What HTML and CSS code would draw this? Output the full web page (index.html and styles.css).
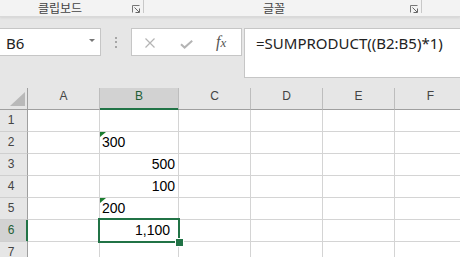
FILE: index.html
```html
<!DOCTYPE html>
<html lang="ko">
<head>
<meta charset="utf-8">
<link rel="stylesheet" href="styles.css">
</head>
<body>
<div class="ribbon">
  <div class="group g1">
    <span class="glabel">클립보드</span>
    <svg class="launcher" width="8" height="8" viewBox="0 0 8 8"><path d="M0.5 7.5V0.5H7.5" fill="none" stroke="#777" stroke-width="1"/><path d="M2.5 2.5L7 7M7.5 3.5V7.5H3.5" fill="none" stroke="#666" stroke-width="1"/></svg>
  </div>
  <div class="group g2">
    <span class="glabel">글꼴</span>
    <svg class="launcher" width="8" height="8" viewBox="0 0 8 8"><path d="M0.5 7.5V0.5H7.5" fill="none" stroke="#777" stroke-width="1"/><path d="M2.5 2.5L7 7M7.5 3.5V7.5H3.5" fill="none" stroke="#666" stroke-width="1"/></svg>
  </div>
</div>
<div class="fbar">
  <div class="namebox"><span class="ref">B6</span><span class="arrow"></span></div>
  <div class="dots"><i></i><i></i><i></i></div>
  <div class="fbuttons">
    <svg class="ic-x" width="10" height="10" viewBox="0 0 10 10"><path d="M0.5 0.5L9.5 9.5M9.5 0.5L0.5 9.5" stroke="#b4b4b4" stroke-width="1.2" fill="none"/></svg>
    <svg class="ic-ok" width="13" height="9" viewBox="0 0 13 9"><path d="M1 4.2L4.6 7.6L12.2 0.8" stroke="#b4b4b4" stroke-width="2" fill="none"/></svg>
    <span class="fx">f<span class="fx-x">x</span></span>
  </div>
  <div class="formula">=SUMPRODUCT((B2:B5)*1)</div>
</div>
<div class="sheet">
  <div class="corner"><svg width="27" height="21" viewBox="0 0 27 21"><path d="M10 18H25V4Z" fill="#b9b9b9"/></svg></div>
  <div class="h">A</div><div class="h hsel">B</div><div class="h">C</div><div class="h">D</div><div class="h">E</div><div class="h">F</div>

  <div class="rh">1</div><div class="c"></div><div class="c"></div><div class="c"></div><div class="c"></div><div class="c"></div><div class="c"></div>
  <div class="rh">2</div><div class="c"></div><div class="c txt">300</div><div class="c"></div><div class="c"></div><div class="c"></div><div class="c"></div>
  <div class="rh">3</div><div class="c"></div><div class="c r">500</div><div class="c"></div><div class="c"></div><div class="c"></div><div class="c"></div>
  <div class="rh">4</div><div class="c"></div><div class="c r">100</div><div class="c"></div><div class="c"></div><div class="c"></div><div class="c"></div>
  <div class="rh">5</div><div class="c"></div><div class="c txt">200</div><div class="c"></div><div class="c"></div><div class="c"></div><div class="c"></div>
  <div class="rh rsel">6</div><div class="c"></div><div class="c r sel">1,100</div><div class="c"></div><div class="c"></div><div class="c"></div><div class="c"></div>
  <div class="rh">7</div><div class="c"></div><div class="c"></div><div class="c"></div><div class="c"></div><div class="c"></div><div class="c"></div>
</div>
</body>
</html>
```
FILE: styles.css
```css
* { box-sizing: border-box; margin: 0; padding: 0; }
html, body { width: 460px; height: 257px; overflow: hidden; }
body {
  background: #e6e6e6;
  font-family: "Liberation Sans", Arial, sans-serif;
}

/* ribbon group labels */
.ribbon {
  height: 17px;
  background: #f3f3f3;
  border-bottom: 1px solid #d9d9d9;
  box-shadow: 0 1px 2px rgba(0, 0, 0, 0.08);
  display: flex;
  align-items: flex-start;
  position: relative;
  z-index: 1;
}
.group {
  display: flex;
  align-items: flex-start;
  height: 13px;
  border-right: 1px solid #c8c8c8;
}
.glabel {
  font-family: "Noto Sans CJK KR", "Noto Sans", sans-serif;
  font-size: 12px;
  line-height: 16px;
  color: #444;
  text-align: center;
  white-space: nowrap;
}
.launcher { margin-top: 5px; flex: none; }
.g1 { width: 144px; }
.g1 .glabel { width: 120px; }
.g1 .launcher { margin-left: 12px; }
.g2 { width: 278px; }
.g2 .glabel { width: 260px; }
.g2 .launcher { margin-left: 6px; }

/* formula bar */
.fbar {
  display: flex;
  align-items: flex-start;
  padding: 11px 0 10px 0;
}
.namebox {
  width: 102px;
  height: 28px;
  margin-left: -1px;
  background: #fff;
  border: 1px solid #c6c6c6;
  display: flex;
  align-items: center;
  justify-content: space-between;
  padding: 0 5px 0 6px;
}
.ref {
  font-family: "Noto Sans", "Open Sans", sans-serif;
  font-size: 15px;
  line-height: 26px;
  padding-top: 1px;
  color: #222;
}
.arrow {
  width: 0;
  height: 0;
  border-left: 3px solid transparent;
  border-right: 3px solid transparent;
  border-top: 3px solid #777;
  margin-bottom: 4px;
}
.dots {
  width: 30px;
  height: 28px;
  display: flex;
  flex-direction: column;
  align-items: center;
  justify-content: center;
  gap: 2.5px;
}
.dots i {
  display: block;
  width: 2px;
  height: 2px;
  background: #a6a6a6;
}
.fbuttons {
  width: 111px;
  height: 28px;
  background: #fff;
  border: 1px solid #c6c6c6;
  display: flex;
  align-items: center;
  padding-left: 13px;
}
.ic-x { margin-top: 1px; }
.ic-ok { margin-left: 25px; margin-top: 4px; }
.fx {
  margin-left: 23px;
  font-family: "Liberation Serif", "DejaVu Serif", serif;
  font-style: italic;
  font-size: 16px;
  line-height: 16px;
  color: #555;
}
.fx-x { font-size: 13px; }
.formula {
  flex: 1;
  margin-left: 2px;
  margin-right: -2px;
  height: 50px;
  background: #fff;
  border: 1px solid #c6c6c6;
  padding-left: 11px;
  font-family: "Noto Sans", "Open Sans", sans-serif;
  font-size: 15px;
  line-height: 26px;
  padding-top: 1px;
  color: #222;
  white-space: nowrap;
}

/* sheet grid */
.sheet {
  display: grid;
  grid-template-columns: 28px 72px 79px 72px 72px 72px 72px;
  grid-auto-rows: 22px;
  width: 467px;
}
.corner {
  background: #e6e6e6;
  border-right: 1px solid #9f9f9f;
  border-bottom: 1px solid #9f9f9f;
}
.corner svg { display: block; }
.h {
  background: #e6e6e6;
  border-right: 1px solid #bdbdbd;
  border-bottom: 1px solid #9f9f9f;
  font-size: 12px;
  line-height: 17px;
  text-align: center;
  color: #444;
}
.hsel {
  background: #d2d2d2;
  color: #1d5e35;
  border-bottom-color: #217346;
  box-shadow: inset 0 -1px 0 #217346;
}
.rh {
  background: #e6e6e6;
  border-right: 1px solid #9f9f9f;
  border-bottom: 1px solid #cfcfcf;
  font-size: 12px;
  line-height: 21px;
  text-align: center;
  padding-right: 5px;
  color: #444;
}
.rsel {
  background: #d2d2d2;
  color: #1d5e35;
  border-right-color: #217346;
  box-shadow: inset -1px 0 0 #217346;
}
.c {
  background: #fff;
  border-right: 1px solid #d4d4d4;
  border-bottom: 1px solid #d4d4d4;
  font-size: 14px;
  line-height: 21px;
  padding: 0 3px 0 2px;
  white-space: nowrap;
  color: #000;
}
.r { text-align: right; }
.txt { position: relative; }
.txt::before {
  content: "";
  position: absolute;
  left: 0;
  top: 0;
  width: 0;
  height: 0;
  border-top: 5px solid #1b7d30;
  border-right: 6px solid transparent;
}
.sel {
  position: relative;
  padding-right: 8px;
}
.sel::after {
  content: "";
  position: absolute;
  left: -2px;
  top: -2px;
  right: -2px;
  bottom: -2px;
  border: 2px solid #217346;
  z-index: 2;
}
.sel::before {
  content: "";
  position: absolute;
  left: 75px;
  top: 18px;
  width: 7px;
  height: 7px;
  background: #217346;
  border: 1px solid #fff;
  z-index: 3;
}
```
